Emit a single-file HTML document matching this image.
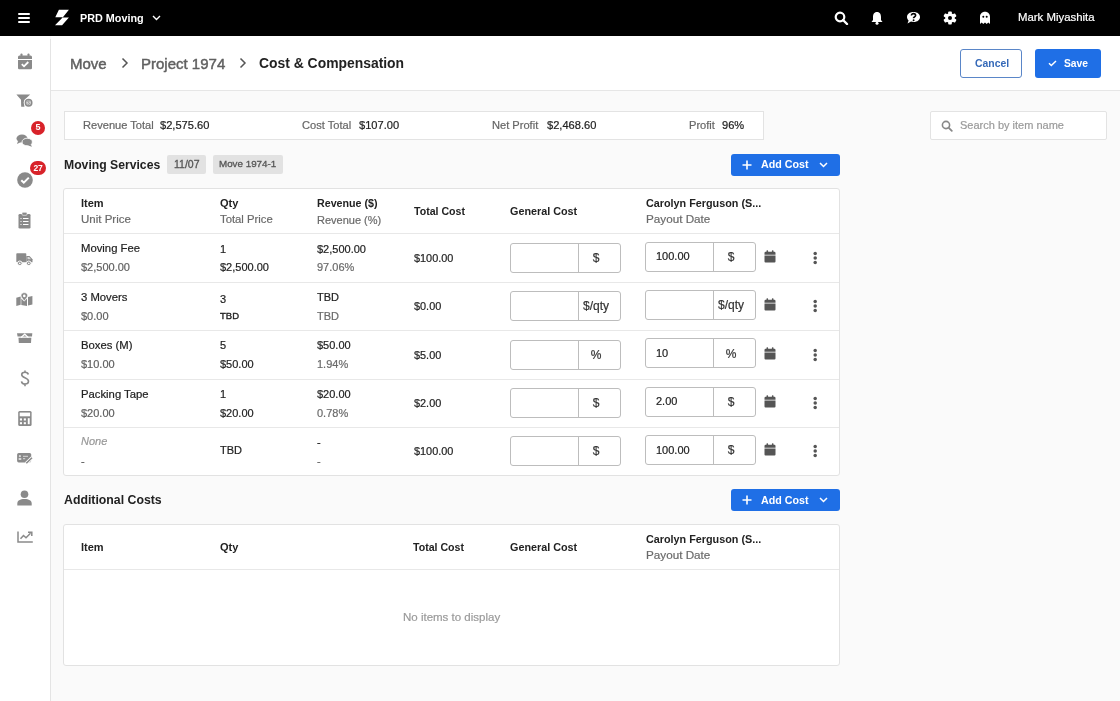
<!DOCTYPE html>
<html><head><meta charset="utf-8"><style>
html,body{margin:0;padding:0;width:1120px;height:701px;overflow:hidden;background:#fafafa;font-family:"Liberation Sans", sans-serif;}
.t{position:absolute;white-space:nowrap;will-change:transform;}
.b{position:absolute;}
</style></head><body>
<div class="b" style="left:0px;top:0px;width:1120px;height:36px;background:#000"></div>
<div class="b" style="left:18px;top:13px;width:12px;height:2px;background:#fff;border-radius:1px"></div>
<div class="b" style="left:18px;top:17px;width:12px;height:2px;background:#fff;border-radius:1px"></div>
<div class="b" style="left:18px;top:21px;width:12px;height:2px;background:#fff;border-radius:1px"></div>
<svg class="b" style="left:54px;top:9px" width="16" height="17" viewBox="0 0 16 17"><path d="M4.9 0.8 L14.9 0.8 L8.9 8.2 L1.3 8.2 Z M8.6 8.6 L14.9 8.6 L8.1 16.2 L1 16.2 Z" fill="#fff"/></svg>
<div class="t" style="left:79.6px;top:12.56px;font-size:10.8px;line-height:10.8px;font-weight:bold;color:#fff;">PRD Moving</div>
<svg class="b" style="left:152px;top:15px" width="9" height="6" viewBox="0 0 9 6"><path d="M1 1 L4.5 4.5 L8 1" stroke="#fff" stroke-width="1.4" fill="none"/></svg>
<svg class="b" style="left:834px;top:11px" width="15" height="14" viewBox="0 0 15 14"><circle cx="6" cy="6" r="4.3" stroke="#fff" stroke-width="2.2" fill="none"/><path d="M9 9 L13 13" stroke="#fff" stroke-width="2.4" stroke-linecap="round"/></svg>
<svg class="b" style="left:870px;top:11px" width="14" height="14" viewBox="0 0 14 14"><path d="M7 1 C4 1 3 3.5 3 6 L3 9 L1.5 11 L12.5 11 L11 9 L11 6 C11 3.5 10 1 7 1 Z" fill="#fff"/><circle cx="7" cy="12.3" r="1.5" fill="#fff"/></svg>
<svg class="b" style="left:906px;top:11px" width="15" height="14" viewBox="0 0 15 14"><path d="M7.5 1 C11.5 1 14 3.3 14 6 C14 8.8 11.5 11 7.5 11 C6.6 11 5.8 10.9 5 10.6 L1.5 12.5 L2.6 9.4 C1.6 8.5 1 7.3 1 6 C1 3.3 3.5 1 7.5 1 Z" fill="#fff"/><path d="M5.4 4.6 C5.4 3.2 6.4 2.6 7.5 2.6 C8.7 2.6 9.6 3.3 9.6 4.4 C9.6 5.6 8.2 5.8 7.6 6.8 L7.6 7.3" stroke="#000" stroke-width="1.6" fill="none"/><circle cx="7.6" cy="9.2" r="0.95" fill="#000"/></svg>
<svg class="b" style="left:943px;top:10.5px" width="14" height="14" viewBox="0 0 14 14"><g fill="#fff"><circle cx="7" cy="7" r="4.8"/><rect x="5.2" y="0.4" width="3.6" height="4" rx="0.8" transform="rotate(0 7 7)"/><rect x="5.2" y="0.4" width="3.6" height="4" rx="0.8" transform="rotate(60 7 7)"/><rect x="5.2" y="0.4" width="3.6" height="4" rx="0.8" transform="rotate(120 7 7)"/><rect x="5.2" y="0.4" width="3.6" height="4" rx="0.8" transform="rotate(180 7 7)"/><rect x="5.2" y="0.4" width="3.6" height="4" rx="0.8" transform="rotate(240 7 7)"/><rect x="5.2" y="0.4" width="3.6" height="4" rx="0.8" transform="rotate(300 7 7)"/></g><circle cx="7" cy="7" r="2" fill="#000"/></svg>
<svg class="b" style="left:979px;top:11px" width="12" height="14" viewBox="0 0 12 14"><path d="M6 0.8 C9 0.8 11 3 11 6 L11 13 L9.3 11.6 L7.7 13 L6 11.6 L4.3 13 L2.7 11.6 L1 13 L1 6 C1 3 3 0.8 6 0.8 Z" fill="#fff"/><circle cx="4.3" cy="5.8" r="1" fill="#000"/><circle cx="7.7" cy="5.8" r="1" fill="#000"/></svg>
<div class="t" style="left:1018px;top:11.75px;font-size:11.4px;line-height:11.4px;font-weight:normal;color:#fff;-webkit-text-stroke:0.2px #fff;">Mark Miyashita</div>
<div class="b" style="left:0px;top:36px;width:50px;height:665px;background:#fff"></div>
<div class="b" style="left:50px;top:39px;width:1px;height:662px;background:#e4e4e4"></div>
<div class="b" style="left:51px;top:36px;width:1069px;height:54px;background:#fff"></div>
<div class="b" style="left:51px;top:90px;width:1069px;height:1px;background:#e6e6e6"></div>
<div class="t" style="left:70.4px;top:56.20px;font-size:15px;line-height:15px;font-weight:normal;color:#606060;-webkit-text-stroke:0.45px #606060;">Move</div>
<svg class="b" style="left:121px;top:57px" width="8" height="12" viewBox="0 0 8 12"><path d="M1.5 1.5 L6 6 L1.5 10.5" stroke="#555" stroke-width="1.5" fill="none"/></svg>
<div class="t" style="left:140.5px;top:56.20px;font-size:15px;line-height:15px;font-weight:normal;color:#606060;-webkit-text-stroke:0.45px #606060;">Project 1974</div>
<svg class="b" style="left:239px;top:57px" width="8" height="12" viewBox="0 0 8 12"><path d="M1.5 1.5 L6 6 L1.5 10.5" stroke="#555" stroke-width="1.5" fill="none"/></svg>
<div class="t" style="left:258.6px;top:57.13px;font-size:13.9px;line-height:13.9px;font-weight:bold;color:#222;">Cost &amp; Compensation</div>
<div class="b" style="left:960px;top:49px;width:62px;height:28.5px;border:1px solid #5a86c8;border-radius:3px;background:#fff;box-sizing:border-box"></div>
<div class="t" style="left:974.5px;top:59.20px;font-size:10.4px;line-height:10.4px;font-weight:bold;color:#3569b8;">Cancel</div>
<div class="b" style="left:1035px;top:49px;width:66px;height:28.5px;background:#1f6fe6;border-radius:3px"></div>
<svg class="b" style="left:1048px;top:58px" width="9" height="9" viewBox="0 0 9 9"><path d="M1 5.3 L3.3 7.5 L8 3" stroke="#fff" stroke-width="1.5" fill="none"/></svg>
<div class="t" style="left:1064px;top:59.28px;font-size:10.3px;line-height:10.3px;font-weight:bold;color:#fff;">Save</div>
<div class="b" style="left:51px;top:91px;width:1069px;height:610px;background:#fafafa"></div>
<div class="b" style="left:63.5px;top:110.5px;width:700px;height:29.5px;background:#fff;border:1px solid #e3e3e3;box-sizing:border-box"></div>
<div class="t" style="left:83.4px;top:119.90px;font-size:11.1px;line-height:11.1px;font-weight:normal;color:#666;-webkit-text-stroke:0.2px #666;">Revenue Total</div>
<div class="t" style="left:160px;top:119.90px;font-size:11.1px;line-height:11.1px;font-weight:normal;color:#222;-webkit-text-stroke:0.2px #222;">$2,575.60</div>
<div class="t" style="left:301.8px;top:119.90px;font-size:11.1px;line-height:11.1px;font-weight:normal;color:#666;-webkit-text-stroke:0.2px #666;">Cost Total</div>
<div class="t" style="left:359px;top:119.90px;font-size:11.1px;line-height:11.1px;font-weight:normal;color:#222;-webkit-text-stroke:0.2px #222;">$107.00</div>
<div class="t" style="left:491.8px;top:119.90px;font-size:11.1px;line-height:11.1px;font-weight:normal;color:#666;-webkit-text-stroke:0.2px #666;">Net Profit</div>
<div class="t" style="left:547px;top:119.90px;font-size:11.1px;line-height:11.1px;font-weight:normal;color:#222;-webkit-text-stroke:0.2px #222;">$2,468.60</div>
<div class="t" style="left:688.7px;top:119.90px;font-size:11.1px;line-height:11.1px;font-weight:normal;color:#666;-webkit-text-stroke:0.2px #666;">Profit</div>
<div class="t" style="left:722.4px;top:119.90px;font-size:11.1px;line-height:11.1px;font-weight:normal;color:#222;-webkit-text-stroke:0.2px #222;">96%</div>
<div class="b" style="left:930px;top:111px;width:177px;height:28.5px;background:#fff;border:1px solid #e3e3e3;box-sizing:border-box;border-radius:2px"></div>
<svg class="b" style="left:941px;top:120px" width="12" height="12" viewBox="0 0 12 12"><circle cx="5" cy="5" r="3.6" stroke="#888" stroke-width="1.6" fill="none"/><path d="M7.6 7.6 L10.8 10.8" stroke="#888" stroke-width="1.8" stroke-linecap="round"/></svg>
<div class="t" style="left:959.5px;top:120.29px;font-size:11px;line-height:11px;font-weight:normal;color:#9a9a9a;-webkit-text-stroke:0.2px #9a9a9a;">Search by item name</div>
<div class="t" style="left:64px;top:158.57px;font-size:12.2px;line-height:12.2px;font-weight:bold;color:#222;">Moving Services</div>
<div class="b" style="left:167px;top:155px;width:38.5px;height:18.5px;background:#e2e2e2;border-radius:2px"></div>
<div class="t" style="left:173.5px;top:158.71px;font-size:10.5px;line-height:10.5px;font-weight:normal;color:#555;-webkit-text-stroke:0.3px #555;">11/07</div>
<div class="b" style="left:212.5px;top:155px;width:70.5px;height:18.5px;background:#e2e2e2;border-radius:2px"></div>
<div class="t" style="left:218.5px;top:159.30px;font-size:9.8px;line-height:9.8px;font-weight:normal;color:#555;-webkit-text-stroke:0.3px #555;">Move 1974-1</div>
<div class="b" style="left:731px;top:153.5px;width:108.5px;height:22px;background:#1f6fe6;border-radius:3px"></div>
<svg class="b" style="left:742px;top:159.5px" width="10" height="10" viewBox="0 0 10 10"><path d="M5 0.5 V9.5 M0.5 5 H9.5" stroke="#fff" stroke-width="1.6"/></svg>
<div class="t" style="left:761px;top:159.24px;font-size:10.7px;line-height:10.7px;font-weight:bold;color:#fff;">Add Cost</div>
<svg class="b" style="left:819px;top:161.5px" width="9" height="6" viewBox="0 0 9 6"><path d="M1 1 L4.5 4.5 L8 1" stroke="#fff" stroke-width="1.5" fill="none"/></svg>
<div class="b" style="left:63px;top:188px;width:777px;height:288px;background:#fff;border:1px solid #e2e2e2;border-radius:3px;box-sizing:border-box"></div>
<div class="b" style="left:64px;top:233px;width:775px;height:1px;background:#e8e8e8"></div>
<div class="b" style="left:64px;top:281.5px;width:775px;height:1px;background:#e8e8e8"></div>
<div class="b" style="left:64px;top:330px;width:775px;height:1px;background:#e8e8e8"></div>
<div class="b" style="left:64px;top:378.5px;width:775px;height:1px;background:#e8e8e8"></div>
<div class="b" style="left:64px;top:426.5px;width:775px;height:1px;background:#e8e8e8"></div>
<div class="t" style="left:80.7px;top:197.69px;font-size:11px;line-height:11px;font-weight:bold;color:#222;">Item</div>
<div class="t" style="left:80.7px;top:214.27px;font-size:11.5px;line-height:11.5px;font-weight:normal;color:#6a6a6a;-webkit-text-stroke:0.2px #6a6a6a;">Unit Price</div>
<div class="t" style="left:220px;top:197.69px;font-size:11px;line-height:11px;font-weight:bold;color:#222;">Qty</div>
<div class="t" style="left:220px;top:214.43px;font-size:11.3px;line-height:11.3px;font-weight:normal;color:#6a6a6a;-webkit-text-stroke:0.2px #6a6a6a;">Total Price</div>
<div class="t" style="left:317px;top:197.94px;font-size:10.7px;line-height:10.7px;font-weight:bold;color:#222;">Revenue ($)</div>
<div class="t" style="left:317px;top:214.69px;font-size:11px;line-height:11px;font-weight:normal;color:#6a6a6a;-webkit-text-stroke:0.2px #6a6a6a;">Revenue (%)</div>
<div class="t" style="left:413.7px;top:206.03px;font-size:10.6px;line-height:10.6px;font-weight:bold;color:#222;">Total Cost</div>
<div class="t" style="left:510.3px;top:205.86px;font-size:10.8px;line-height:10.8px;font-weight:bold;color:#222;">General Cost</div>
<div class="t" style="left:645.5px;top:197.86px;font-size:10.8px;line-height:10.8px;font-weight:bold;color:#222;">Carolyn Ferguson (S...</div>
<div class="t" style="left:645.5px;top:213.10px;font-size:11.7px;line-height:11.7px;font-weight:normal;color:#6a6a6a;-webkit-text-stroke:0.2px #6a6a6a;">Payout Date</div>
<div class="t" style="left:80.7px;top:243.43px;font-size:11.3px;line-height:11.3px;font-weight:normal;color:#222;-webkit-text-stroke:0.2px #222;">Moving Fee</div>
<div class="t" style="left:80.7px;top:262.49px;font-size:11px;line-height:11px;font-weight:normal;color:#5f5f5f;-webkit-text-stroke:0.2px #5f5f5f;">$2,500.00</div>
<div class="t" style="left:220px;top:243.69px;font-size:11px;line-height:11px;font-weight:normal;color:#222;-webkit-text-stroke:0.2px #222;">1</div>
<div class="t" style="left:220px;top:262.49px;font-size:11px;line-height:11px;font-weight:normal;color:#222;-webkit-text-stroke:0.2px #222;">$2,500.00</div>
<div class="t" style="left:317px;top:243.69px;font-size:11px;line-height:11px;font-weight:normal;color:#222;-webkit-text-stroke:0.2px #222;">$2,500.00</div>
<div class="t" style="left:317px;top:262.49px;font-size:11px;line-height:11px;font-weight:normal;color:#6a6a6a;-webkit-text-stroke:0.2px #6a6a6a;">97.06%</div>
<div class="t" style="left:413.7px;top:253.07px;font-size:10.9px;line-height:10.9px;font-weight:normal;color:#222;-webkit-text-stroke:0.2px #222;">$100.00</div>
<div class="b" style="left:510px;top:242.8px;width:111px;height:30px;background:#fff;border:1px solid #bdbdbd;border-radius:3px;box-sizing:border-box"></div>
<div class="b" style="left:578px;top:243.8px;width:1px;height:28px;background:#bdbdbd"></div>
<div class="t" style="left:566px;top:251.94px;font-size:12px;line-height:12px;font-weight:normal;color:#333;-webkit-text-stroke:0.2px #333;width:60px;text-align:center;">$</div>
<div class="b" style="left:645px;top:241.60000000000002px;width:111px;height:30px;background:#fff;border:1px solid #bdbdbd;border-radius:3px;box-sizing:border-box"></div>
<div class="b" style="left:713px;top:242.60000000000002px;width:1px;height:28px;background:#bdbdbd"></div>
<div class="t" style="left:701px;top:250.74px;font-size:12px;line-height:12px;font-weight:normal;color:#333;-webkit-text-stroke:0.2px #333;width:60px;text-align:center;">$</div>
<div class="t" style="left:656px;top:251.29px;font-size:11px;line-height:11px;font-weight:normal;color:#222;-webkit-text-stroke:0.2px #222;">100.00</div>
<svg class="b" style="left:764px;top:249.8px" width="12" height="13" viewBox="0 0 12 13"><path d="M0.5 3 Q0.5 1.8 1.7 1.8 L10.3 1.8 Q11.5 1.8 11.5 3 L11.5 4.8 L0.5 4.8 Z M0.5 5.6 L11.5 5.6 L11.5 11.5 Q11.5 12.5 10.5 12.5 L1.5 12.5 Q0.5 12.5 0.5 11.5 Z" fill="#555"/><rect x="2.5" y="0.3" width="1.6" height="2.6" rx="0.6" fill="#555"/><rect x="7.9" y="0.3" width="1.6" height="2.6" rx="0.6" fill="#555"/></svg>
<svg class="b" style="left:811px;top:248.8px" width="8" height="18" viewBox="0 0 8 18"><g fill="#555"><circle cx="4.2" cy="4.4" r="1.75"/><circle cx="4.2" cy="9" r="1.75"/><circle cx="4.2" cy="13.5" r="1.75"/></g></svg>
<div class="t" style="left:80.7px;top:291.83px;font-size:11.3px;line-height:11.3px;font-weight:normal;color:#222;-webkit-text-stroke:0.2px #222;">3 Movers</div>
<div class="t" style="left:80.7px;top:310.89px;font-size:11px;line-height:11px;font-weight:normal;color:#5f5f5f;-webkit-text-stroke:0.2px #5f5f5f;">$0.00</div>
<div class="t" style="left:220px;top:293.89px;font-size:11px;line-height:11px;font-weight:normal;color:#222;-webkit-text-stroke:0.2px #222;">3</div>
<div class="t" style="left:220px;top:311.36px;font-size:9.5px;line-height:9.5px;font-weight:normal;color:#222;-webkit-text-stroke:0.35px #222;">TBD</div>
<div class="t" style="left:317px;top:292.09px;font-size:11px;line-height:11px;font-weight:normal;color:#222;-webkit-text-stroke:0.2px #222;">TBD</div>
<div class="t" style="left:317px;top:310.89px;font-size:11px;line-height:11px;font-weight:normal;color:#6a6a6a;-webkit-text-stroke:0.2px #6a6a6a;">TBD</div>
<div class="t" style="left:413.7px;top:301.47px;font-size:10.9px;line-height:10.9px;font-weight:normal;color:#222;-webkit-text-stroke:0.2px #222;">$0.00</div>
<div class="b" style="left:510px;top:291.2px;width:111px;height:30px;background:#fff;border:1px solid #bdbdbd;border-radius:3px;box-sizing:border-box"></div>
<div class="b" style="left:578px;top:292.2px;width:1px;height:28px;background:#bdbdbd"></div>
<div class="t" style="left:566px;top:300.34px;font-size:12px;line-height:12px;font-weight:normal;color:#333;-webkit-text-stroke:0.2px #333;width:60px;text-align:center;">$/qty</div>
<div class="b" style="left:645px;top:290.0px;width:111px;height:30px;background:#fff;border:1px solid #bdbdbd;border-radius:3px;box-sizing:border-box"></div>
<div class="b" style="left:713px;top:291.0px;width:1px;height:28px;background:#bdbdbd"></div>
<div class="t" style="left:701px;top:299.14px;font-size:12px;line-height:12px;font-weight:normal;color:#333;-webkit-text-stroke:0.2px #333;width:60px;text-align:center;">$/qty</div>
<svg class="b" style="left:764px;top:298.2px" width="12" height="13" viewBox="0 0 12 13"><path d="M0.5 3 Q0.5 1.8 1.7 1.8 L10.3 1.8 Q11.5 1.8 11.5 3 L11.5 4.8 L0.5 4.8 Z M0.5 5.6 L11.5 5.6 L11.5 11.5 Q11.5 12.5 10.5 12.5 L1.5 12.5 Q0.5 12.5 0.5 11.5 Z" fill="#555"/><rect x="2.5" y="0.3" width="1.6" height="2.6" rx="0.6" fill="#555"/><rect x="7.9" y="0.3" width="1.6" height="2.6" rx="0.6" fill="#555"/></svg>
<svg class="b" style="left:811px;top:297.2px" width="8" height="18" viewBox="0 0 8 18"><g fill="#555"><circle cx="4.2" cy="4.4" r="1.75"/><circle cx="4.2" cy="9" r="1.75"/><circle cx="4.2" cy="13.5" r="1.75"/></g></svg>
<div class="t" style="left:80.7px;top:340.23px;font-size:11.3px;line-height:11.3px;font-weight:normal;color:#222;-webkit-text-stroke:0.2px #222;">Boxes (M)</div>
<div class="t" style="left:80.7px;top:359.29px;font-size:11px;line-height:11px;font-weight:normal;color:#5f5f5f;-webkit-text-stroke:0.2px #5f5f5f;">$10.00</div>
<div class="t" style="left:220px;top:340.49px;font-size:11px;line-height:11px;font-weight:normal;color:#222;-webkit-text-stroke:0.2px #222;">5</div>
<div class="t" style="left:220px;top:359.29px;font-size:11px;line-height:11px;font-weight:normal;color:#222;-webkit-text-stroke:0.2px #222;">$50.00</div>
<div class="t" style="left:317px;top:340.49px;font-size:11px;line-height:11px;font-weight:normal;color:#222;-webkit-text-stroke:0.2px #222;">$50.00</div>
<div class="t" style="left:317px;top:359.29px;font-size:11px;line-height:11px;font-weight:normal;color:#6a6a6a;-webkit-text-stroke:0.2px #6a6a6a;">1.94%</div>
<div class="t" style="left:413.7px;top:349.87px;font-size:10.9px;line-height:10.9px;font-weight:normal;color:#222;-webkit-text-stroke:0.2px #222;">$5.00</div>
<div class="b" style="left:510px;top:339.6px;width:111px;height:30px;background:#fff;border:1px solid #bdbdbd;border-radius:3px;box-sizing:border-box"></div>
<div class="b" style="left:578px;top:340.6px;width:1px;height:28px;background:#bdbdbd"></div>
<div class="t" style="left:566px;top:348.74px;font-size:12px;line-height:12px;font-weight:normal;color:#333;-webkit-text-stroke:0.2px #333;width:60px;text-align:center;">%</div>
<div class="b" style="left:645px;top:338.40000000000003px;width:111px;height:30px;background:#fff;border:1px solid #bdbdbd;border-radius:3px;box-sizing:border-box"></div>
<div class="b" style="left:713px;top:339.40000000000003px;width:1px;height:28px;background:#bdbdbd"></div>
<div class="t" style="left:701px;top:347.54px;font-size:12px;line-height:12px;font-weight:normal;color:#333;-webkit-text-stroke:0.2px #333;width:60px;text-align:center;">%</div>
<div class="t" style="left:656px;top:348.09px;font-size:11px;line-height:11px;font-weight:normal;color:#222;-webkit-text-stroke:0.2px #222;">10</div>
<svg class="b" style="left:764px;top:346.6px" width="12" height="13" viewBox="0 0 12 13"><path d="M0.5 3 Q0.5 1.8 1.7 1.8 L10.3 1.8 Q11.5 1.8 11.5 3 L11.5 4.8 L0.5 4.8 Z M0.5 5.6 L11.5 5.6 L11.5 11.5 Q11.5 12.5 10.5 12.5 L1.5 12.5 Q0.5 12.5 0.5 11.5 Z" fill="#555"/><rect x="2.5" y="0.3" width="1.6" height="2.6" rx="0.6" fill="#555"/><rect x="7.9" y="0.3" width="1.6" height="2.6" rx="0.6" fill="#555"/></svg>
<svg class="b" style="left:811px;top:345.6px" width="8" height="18" viewBox="0 0 8 18"><g fill="#555"><circle cx="4.2" cy="4.4" r="1.75"/><circle cx="4.2" cy="9" r="1.75"/><circle cx="4.2" cy="13.5" r="1.75"/></g></svg>
<div class="t" style="left:80.7px;top:388.53px;font-size:11.3px;line-height:11.3px;font-weight:normal;color:#222;-webkit-text-stroke:0.2px #222;">Packing Tape</div>
<div class="t" style="left:80.7px;top:407.59px;font-size:11px;line-height:11px;font-weight:normal;color:#5f5f5f;-webkit-text-stroke:0.2px #5f5f5f;">$20.00</div>
<div class="t" style="left:220px;top:388.79px;font-size:11px;line-height:11px;font-weight:normal;color:#222;-webkit-text-stroke:0.2px #222;">1</div>
<div class="t" style="left:220px;top:407.59px;font-size:11px;line-height:11px;font-weight:normal;color:#222;-webkit-text-stroke:0.2px #222;">$20.00</div>
<div class="t" style="left:317px;top:388.79px;font-size:11px;line-height:11px;font-weight:normal;color:#222;-webkit-text-stroke:0.2px #222;">$20.00</div>
<div class="t" style="left:317px;top:407.59px;font-size:11px;line-height:11px;font-weight:normal;color:#6a6a6a;-webkit-text-stroke:0.2px #6a6a6a;">0.78%</div>
<div class="t" style="left:413.7px;top:398.17px;font-size:10.9px;line-height:10.9px;font-weight:normal;color:#222;-webkit-text-stroke:0.2px #222;">$2.00</div>
<div class="b" style="left:510px;top:387.9px;width:111px;height:30px;background:#fff;border:1px solid #bdbdbd;border-radius:3px;box-sizing:border-box"></div>
<div class="b" style="left:578px;top:388.9px;width:1px;height:28px;background:#bdbdbd"></div>
<div class="t" style="left:566px;top:397.04px;font-size:12px;line-height:12px;font-weight:normal;color:#333;-webkit-text-stroke:0.2px #333;width:60px;text-align:center;">$</div>
<div class="b" style="left:645px;top:386.7px;width:111px;height:30px;background:#fff;border:1px solid #bdbdbd;border-radius:3px;box-sizing:border-box"></div>
<div class="b" style="left:713px;top:387.7px;width:1px;height:28px;background:#bdbdbd"></div>
<div class="t" style="left:701px;top:395.84px;font-size:12px;line-height:12px;font-weight:normal;color:#333;-webkit-text-stroke:0.2px #333;width:60px;text-align:center;">$</div>
<div class="t" style="left:656px;top:396.39px;font-size:11px;line-height:11px;font-weight:normal;color:#222;-webkit-text-stroke:0.2px #222;">2.00</div>
<svg class="b" style="left:764px;top:394.9px" width="12" height="13" viewBox="0 0 12 13"><path d="M0.5 3 Q0.5 1.8 1.7 1.8 L10.3 1.8 Q11.5 1.8 11.5 3 L11.5 4.8 L0.5 4.8 Z M0.5 5.6 L11.5 5.6 L11.5 11.5 Q11.5 12.5 10.5 12.5 L1.5 12.5 Q0.5 12.5 0.5 11.5 Z" fill="#555"/><rect x="2.5" y="0.3" width="1.6" height="2.6" rx="0.6" fill="#555"/><rect x="7.9" y="0.3" width="1.6" height="2.6" rx="0.6" fill="#555"/></svg>
<svg class="b" style="left:811px;top:393.9px" width="8" height="18" viewBox="0 0 8 18"><g fill="#555"><circle cx="4.2" cy="4.4" r="1.75"/><circle cx="4.2" cy="9" r="1.75"/><circle cx="4.2" cy="13.5" r="1.75"/></g></svg>
<div class="t" style="left:80.7px;top:436.29px;font-size:11px;line-height:11px;font-weight:normal;color:#999;font-style:italic;-webkit-text-stroke:0.2px #999;">None</div>
<div class="t" style="left:80.7px;top:455.79px;font-size:11px;line-height:11px;font-weight:normal;color:#5f5f5f;-webkit-text-stroke:0.2px #5f5f5f;">-</div>
<div class="t" style="left:220px;top:445.39px;font-size:11px;line-height:11px;font-weight:normal;color:#222;-webkit-text-stroke:0.2px #222;">TBD</div>
<div class="t" style="left:317px;top:436.99px;font-size:11px;line-height:11px;font-weight:normal;color:#222;-webkit-text-stroke:0.2px #222;">-</div>
<div class="t" style="left:317px;top:455.79px;font-size:11px;line-height:11px;font-weight:normal;color:#6a6a6a;-webkit-text-stroke:0.2px #6a6a6a;">-</div>
<div class="t" style="left:413.7px;top:446.37px;font-size:10.9px;line-height:10.9px;font-weight:normal;color:#222;-webkit-text-stroke:0.2px #222;">$100.00</div>
<div class="b" style="left:510px;top:436.1px;width:111px;height:30px;background:#fff;border:1px solid #bdbdbd;border-radius:3px;box-sizing:border-box"></div>
<div class="b" style="left:578px;top:437.1px;width:1px;height:28px;background:#bdbdbd"></div>
<div class="t" style="left:566px;top:445.24px;font-size:12px;line-height:12px;font-weight:normal;color:#333;-webkit-text-stroke:0.2px #333;width:60px;text-align:center;">$</div>
<div class="b" style="left:645px;top:434.90000000000003px;width:111px;height:30px;background:#fff;border:1px solid #bdbdbd;border-radius:3px;box-sizing:border-box"></div>
<div class="b" style="left:713px;top:435.90000000000003px;width:1px;height:28px;background:#bdbdbd"></div>
<div class="t" style="left:701px;top:444.04px;font-size:12px;line-height:12px;font-weight:normal;color:#333;-webkit-text-stroke:0.2px #333;width:60px;text-align:center;">$</div>
<div class="t" style="left:656px;top:444.59px;font-size:11px;line-height:11px;font-weight:normal;color:#222;-webkit-text-stroke:0.2px #222;">100.00</div>
<svg class="b" style="left:764px;top:443.1px" width="12" height="13" viewBox="0 0 12 13"><path d="M0.5 3 Q0.5 1.8 1.7 1.8 L10.3 1.8 Q11.5 1.8 11.5 3 L11.5 4.8 L0.5 4.8 Z M0.5 5.6 L11.5 5.6 L11.5 11.5 Q11.5 12.5 10.5 12.5 L1.5 12.5 Q0.5 12.5 0.5 11.5 Z" fill="#555"/><rect x="2.5" y="0.3" width="1.6" height="2.6" rx="0.6" fill="#555"/><rect x="7.9" y="0.3" width="1.6" height="2.6" rx="0.6" fill="#555"/></svg>
<svg class="b" style="left:811px;top:442.1px" width="8" height="18" viewBox="0 0 8 18"><g fill="#555"><circle cx="4.2" cy="4.4" r="1.75"/><circle cx="4.2" cy="9" r="1.75"/><circle cx="4.2" cy="13.5" r="1.75"/></g></svg>
<div class="t" style="left:64.1px;top:494.49px;font-size:12.3px;line-height:12.3px;font-weight:bold;color:#222;">Additional Costs</div>
<div class="b" style="left:731px;top:489px;width:108.5px;height:22px;background:#1f6fe6;border-radius:3px"></div>
<svg class="b" style="left:742px;top:495px" width="10" height="10" viewBox="0 0 10 10"><path d="M5 0.5 V9.5 M0.5 5 H9.5" stroke="#fff" stroke-width="1.6"/></svg>
<div class="t" style="left:761px;top:494.74px;font-size:10.7px;line-height:10.7px;font-weight:bold;color:#fff;">Add Cost</div>
<svg class="b" style="left:819px;top:497px" width="9" height="6" viewBox="0 0 9 6"><path d="M1 1 L4.5 4.5 L8 1" stroke="#fff" stroke-width="1.5" fill="none"/></svg>
<div class="b" style="left:63px;top:524px;width:777px;height:142px;background:#fff;border:1px solid #e2e2e2;border-radius:3px;box-sizing:border-box"></div>
<div class="b" style="left:64px;top:568.8px;width:775px;height:1px;background:#e8e8e8"></div>
<div class="t" style="left:80.7px;top:541.69px;font-size:11px;line-height:11px;font-weight:bold;color:#222;">Item</div>
<div class="t" style="left:220px;top:541.69px;font-size:11px;line-height:11px;font-weight:bold;color:#222;">Qty</div>
<div class="t" style="left:413.4px;top:542.03px;font-size:10.6px;line-height:10.6px;font-weight:bold;color:#222;">Total Cost</div>
<div class="t" style="left:510.3px;top:541.86px;font-size:10.8px;line-height:10.8px;font-weight:bold;color:#222;">General Cost</div>
<div class="t" style="left:645.5px;top:533.96px;font-size:10.8px;line-height:10.8px;font-weight:bold;color:#222;">Carolyn Ferguson (S...</div>
<div class="t" style="left:645.5px;top:549.10px;font-size:11.7px;line-height:11.7px;font-weight:normal;color:#6a6a6a;-webkit-text-stroke:0.2px #6a6a6a;">Payout Date</div>
<div class="t" style="left:403.1px;top:611.67px;font-size:11.5px;line-height:11.5px;font-weight:normal;color:#9a9a9a;-webkit-text-stroke:0.2px #9a9a9a;">No items to display</div>
<svg class="b" style="left:16.70px;top:52.50px" width="16" height="17" viewBox="0 0 16 17"><path d="M1 4 Q1 2.5 2.5 2.5 L13.5 2.5 Q15 2.5 15 4 L15 6 L1 6 Z M1 7 L15 7 L15 15 Q15 16.3 13.7 16.3 L2.3 16.3 Q1 16.3 1 15 Z" fill="#8a8a8a"/><rect x="3.5" y="0.5" width="2" height="3.5" rx="0.8" fill="#8a8a8a"/><rect x="10.5" y="0.5" width="2" height="3.5" rx="0.8" fill="#8a8a8a"/><path d="M4.8 11.2 L7 13.3 L11.3 9" stroke="#fff" stroke-width="1.8" fill="none"/></svg>
<svg class="b" style="left:16.20px;top:93.50px" width="17" height="14" viewBox="0 0 17 14"><path d="M0.4 0.6 L14.2 0.6 L8.6 5.8 L8.4 12.8 L5.2 12.8 L5 5.8 Z" fill="#8a8a8a"/><circle cx="12.6" cy="8.8" r="4.9" fill="#fff"/><circle cx="12.6" cy="8.8" r="3.2" fill="#d4d4d4" stroke="#8a8a8a" stroke-width="1.5"/><path d="M13.6 7.3 C13.3 6.8 12.1 6.6 11.8 7.4 C11.5 8.3 13.7 8.4 13.4 9.6 C13.1 10.6 11.9 10.5 11.5 10" stroke="#8a8a8a" stroke-width="0.9" fill="none"/></svg>
<svg class="b" style="left:16.20px;top:134.00px" width="17" height="13" viewBox="0 0 17 13"><ellipse cx="6" cy="4.5" rx="5.5" ry="4" fill="#8a8a8a"/><path d="M2 7 L1 10 L5 8 Z" fill="#8a8a8a"/><ellipse cx="11.2" cy="8" rx="5.2" ry="3.8" fill="#8a8a8a" stroke="#fff" stroke-width="0.9"/><path d="M14.5 10 L16 12.8 L12 11.5 Z" fill="#8a8a8a"/></svg>
<svg class="b" style="left:16.70px;top:172.30px" width="16" height="16" viewBox="0 0 16 16"><circle cx="8" cy="8" r="7.8" fill="#8a8a8a"/><path d="M4.3 8.2 L6.8 10.7 L11.8 5.6" stroke="#fff" stroke-width="2" fill="none"/></svg>
<svg class="b" style="left:18.20px;top:211.50px" width="13" height="17" viewBox="0 0 13 17"><rect x="0.5" y="2" width="12" height="14.5" rx="1.3" fill="#8a8a8a"/><rect x="4" y="0.3" width="5" height="3" rx="1" fill="#8a8a8a" stroke="#fff" stroke-width="0.6"/><g stroke="#fff" stroke-width="1"><path d="M2.5 6.5 H3.5 M5 6.5 H10.5 M2.5 9.5 H3.5 M5 9.5 H10.5 M2.5 12.5 H3.5 M5 12.5 H10.5"/></g></svg>
<svg class="b" style="left:16.20px;top:252.80px" width="17" height="13" viewBox="0 0 17 13"><rect x="0.3" y="0.3" width="10" height="9" rx="0.8" fill="#8a8a8a"/><path d="M10.3 3 L13.5 3 L16.5 6.3 L16.5 9.3 L10.3 9.3 Z" fill="#8a8a8a"/><path d="M11.5 4 L13.2 4 L15 6.2 L11.5 6.2 Z" fill="#d8d8d8"/><circle cx="3.8" cy="10.3" r="2.3" fill="#8a8a8a" stroke="#fff" stroke-width="1"/><circle cx="12.8" cy="10.3" r="2.3" fill="#8a8a8a" stroke="#fff" stroke-width="1"/><circle cx="3.8" cy="10.3" r="0.9" fill="#fff"/><circle cx="12.8" cy="10.3" r="0.9" fill="#fff"/></svg>
<svg class="b" style="left:16.20px;top:292.00px" width="17" height="15" viewBox="0 0 17 15"><path d="M0.3 5.8 L4.7 4.6 L4.7 12.8 L0.3 13.9 Z M5.3 6.6 L8.2 9.4 L11 6.6 L11 13.9 L5.3 13 Z M12 5 L16.4 4 L16.4 12.5 L12 13.6 Z" fill="#8a8a8a"/><path d="M8.3 9 L5.6 5.2 C4.3 3 5.6 0.8 8.3 0.8 C11 0.8 12.3 3 11 5.2 Z" fill="#8a8a8a" stroke="#fff" stroke-width="0.5"/><circle cx="8.3" cy="3.9" r="1.3" fill="#fff"/></svg>
<svg class="b" style="left:16.70px;top:332.20px" width="16" height="12" viewBox="0 0 16 12"><path d="M0 1.2 L15.3 1.2 L15 4.5 L0.6 4.5 Z" fill="#8a8a8a"/><path d="M1.5 5.8 L14.3 5.8 L14 11 L1.8 11 Z" fill="#8a8a8a"/><path d="M4 5.6 L7.8 2.2 L11.4 5.6" stroke="#fff" stroke-width="1.3" fill="none"/></svg>
<svg class="b" style="left:19.70px;top:370.10px" width="10" height="17" viewBox="0 0 10 17"><path d="M8.3 4.5 C8 3 6.8 2.3 5 2.3 C3 2.3 1.7 3.3 1.7 4.8 C1.7 8.3 8.5 7.2 8.5 11.3 C8.5 13 7 14 5 14 C3 14 1.7 13 1.5 11.3 M5 0.5 V2.3 M5 14 V16.3" stroke="#8a8a8a" stroke-width="1.6" fill="none"/></svg>
<svg class="b" style="left:17.70px;top:409.70px" width="14" height="16" viewBox="0 0 14 16"><rect x="0.2" y="0.9" width="13.4" height="15" rx="1.5" fill="#8a8a8a"/><rect x="1.7" y="2.6" width="10.4" height="3.7" fill="#fff"/><g fill="#fff"><rect x="1.9" y="8.4" width="2.1" height="2.1"/><rect x="5.8" y="8.4" width="2.1" height="2.1"/><rect x="1.9" y="12.2" width="2.1" height="2"/><rect x="5.8" y="12.2" width="2.1" height="2"/><rect x="9.8" y="8.2" width="1.9" height="6"/></g></svg>
<svg class="b" style="left:16.70px;top:453.20px" width="16" height="11" viewBox="0 0 16 11"><rect x="0.1" y="0" width="14.1" height="9.4" rx="1.6" fill="#8a8a8a"/><circle cx="2.9" cy="3.2" r="1.1" fill="#d8d8d8"/><rect x="1.6" y="4.9" width="2.7" height="2.2" rx="0.5" fill="#d8d8d8"/><rect x="6" y="2.8" width="5" height="1" fill="#d8d8d8"/><rect x="6" y="5.2" width="2.2" height="1" fill="#d8d8d8"/><path d="M9.2 10.4 L15.2 4.6" stroke="#fff" stroke-width="3.4"/><path d="M9.3 10.3 L15 4.7" stroke="#8a8a8a" stroke-width="1.6"/></svg>
<svg class="b" style="left:17.20px;top:489.50px" width="15" height="16" viewBox="0 0 15 16"><circle cx="7.5" cy="4.2" r="3.8" fill="#8a8a8a"/><path d="M0.3 15.5 L0.3 13.5 C0.3 10.5 3 9 7.5 9 C12 9 14.7 10.5 14.7 13.5 L14.7 15.5 Z" fill="#8a8a8a"/></svg>
<svg class="b" style="left:16.70px;top:531.00px" width="16" height="12" viewBox="0 0 16 12"><path d="M1 0.5 L1 11 L15.8 11" stroke="#8a8a8a" stroke-width="1.5" fill="none"/><path d="M3.5 7.8 L6.5 4.5 L9 6.7 L13.5 2.3" stroke="#8a8a8a" stroke-width="1.5" fill="none"/><path d="M11 1.2 L14.8 1.2 L14.8 5" stroke="#8a8a8a" stroke-width="1.5" fill="none"/></svg>
<div class="b" style="left:31.3px;top:120.7px;width:14px;height:14px;background:#d8232a;border-radius:50%"></div>
<div class="t" style="left:31.3px;top:123.38px;font-size:9px;line-height:9px;font-weight:bold;color:#fff;width:14px;text-align:center;">5</div>
<div class="b" style="left:29.5px;top:160.7px;width:16px;height:14px;background:#d8232a;border-radius:7px"></div>
<div class="t" style="left:29.5px;top:163.80px;font-size:8.5px;line-height:8.5px;font-weight:bold;color:#fff;width:16px;text-align:center;letter-spacing:-0.3px;">27</div>
</body></html>
